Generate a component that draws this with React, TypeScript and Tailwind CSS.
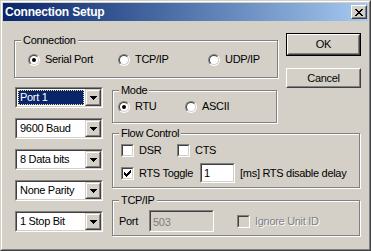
import type { ReactNode } from 'react';

const X_ROWS = ['XX....XX', '.XX..XX.', '..XXXX..', '...XX...', '..XXXX..', '.XX..XX.', 'XX....XX'];

function CloseGlyph() {
  return (
    <svg width="8" height="7" viewBox="0 0 8 7" shapeRendering="crispEdges">
      {X_ROWS.flatMap((row, y) =>
        row.split('').map((c, x) => (c === 'X' ? <rect key={`${x}-${y}`} x={x} y={y} width="1" height="1" fill="#000" /> : null))
      )}
    </svg>
  );
}

function Arrow() {
  return (
    <svg width="7" height="4" viewBox="0 0 7 4" shapeRendering="crispEdges">
      <rect x="0" y="0" width="7" height="1" fill="#000" />
      <rect x="1" y="1" width="5" height="1" fill="#000" />
      <rect x="2" y="2" width="3" height="1" fill="#000" />
      <rect x="3" y="3" width="1" height="1" fill="#000" />
    </svg>
  );
}

function Group({ label, className, children }: { label: string; className: string; children?: ReactNode }) {
  return (
    <div className={`relative border border-[#808080] shadow-[1px_1px_0_#fff,inset_1px_1px_0_#fff] ${className}`}>
      <span className="absolute left-[6px] top-[-7px] px-[2px] bg-[#d4d0c8] leading-[13px]">{label}</span>
      {children}
    </div>
  );
}

function Button({ label, isDefault }: { label: string; isDefault?: boolean }) {
  return (
    <div className={`w-[75px] h-[23px] ${isDefault ? 'border border-black' : ''}`}>
      <div className="h-full border border-white border-r-[#404040] border-b-[#404040]">
        <div className="h-full flex items-center justify-center border border-transparent border-r-[#808080] border-b-[#808080]">
          {label}
        </div>
      </div>
    </div>
  );
}

function Sunken({ className, inner, children }: { className: string; inner: string; children?: ReactNode }) {
  return (
    <div className={`border border-[#808080] border-r-white border-b-white ${className}`}>
      <div className={`h-full border border-[#404040] border-r-[#d4d0c8] border-b-[#d4d0c8] ${inner}`}>{children}</div>
    </div>
  );
}

function Combo({ value, selected }: { value: string; selected?: boolean }) {
  return (
    <Sunken className="w-[88px] h-[21px]" inner="flex bg-white">
      <div className="flex-1 p-[1px]">
        {selected ? (
          <div className="h-full flex items-center pl-[1px] bg-[#0a246a] text-white border border-dotted border-[#e8e0a0]">{value}</div>
        ) : (
          <div className="h-full flex items-center pl-[2px]">{value}</div>
        )}
      </div>
      <div className="w-[16px] h-full border border-[#d4d0c8] border-r-[#404040] border-b-[#404040]">
        <div className="h-full flex items-center justify-center bg-[#d4d0c8] border border-white border-r-[#808080] border-b-[#808080]">
          <Arrow />
        </div>
      </div>
    </Sunken>
  );
}

function Radio({ label, checked }: { label: string; checked?: boolean }) {
  return (
    <div className="flex items-center gap-[5px]">
      <div className="w-[12px] h-[12px] rounded-full border border-[#808080] border-r-white border-b-white">
        <div className="h-full rounded-full flex items-center justify-center bg-white border border-[#404040] border-r-[#d4d0c8] border-b-[#d4d0c8]">
          {checked && <div className="w-[4px] h-[4px] rounded-full bg-black" />}
        </div>
      </div>
      <span className="leading-[13px]">{label}</span>
    </div>
  );
}

function Check({ label, checked, disabled }: { label: string; checked?: boolean; disabled?: boolean }) {
  return (
    <div className="flex items-center gap-[5px]">
      <Sunken className="w-[13px] h-[13px] shrink-0" inner={`flex items-center justify-center ${disabled ? 'bg-[#d4d0c8]' : 'bg-white'}`}>
        {checked && (
          <svg width="7" height="7" viewBox="0 0 7 7" shapeRendering="crispEdges">
            <path d="M6 0h1v3h-1v1h-1v1h-1v1h-1v1h-1v-1h-1v-1h-1v-3h1v1h1v1h1v-1h1v-1h1z" fill="#000" />
          </svg>
        )}
      </Sunken>
      <span className={`leading-[13px] ${disabled ? 'text-[#808080] [text-shadow:1px_1px_0_#fff]' : ''}`}>{label}</span>
    </div>
  );
}

export default function App() {
  return (
    <div className="w-[371px] h-[251px] bg-[#d4d0c8] text-black text-[11px] tracking-[-0.3px] font-['Liberation_Sans',Arial,sans-serif] border border-[#d4d0c8] border-r-[#404040] border-b-[#404040]">
      <div className="h-full border border-white border-r-[#808080] border-b-[#808080] p-[1px]">
        <div className="h-[18px] flex items-center justify-between pl-[2px] pr-[1px] bg-linear-to-r from-[#0a246a] to-[#a6caf0]">
          <span className="text-white font-bold text-[12px] tracking-[-0.2px] leading-none">Connection Setup</span>
          <div className="w-[16px] h-[14px] border border-white border-r-[#404040] border-b-[#404040]">
            <div className="h-full flex items-center justify-center bg-[#d4d0c8] border border-transparent border-r-[#808080] border-b-[#808080]">
              <CloseGlyph />
            </div>
          </div>
        </div>

        <div className="pl-[11px] pt-[12px]">
          <div className="flex h-[45px]">
            <Group label="Connection" className="mt-[7px] w-[264px] h-[38px] flex items-center pl-[13px] pt-[1px]">
              <div className="w-[90px]"><Radio label="Serial Port" checked /></div>
              <div className="w-[90px]"><Radio label="TCP/IP" /></div>
              <Radio label="UDP/IP" />
            </Group>
            <div className="ml-[8px] flex flex-col gap-[12px]">
              <Button label="OK" isDefault />
              <Button label="Cancel" />
            </div>
          </div>

          <div className="flex mt-[9px]">
            <div className="ml-[1px] flex flex-col gap-[10px]">
              <Combo value="Port 1" selected />
              <Combo value="9600 Baud" />
              <Combo value="8 Data bits" />
              <Combo value="None Parity" />
              <Combo value="1 Stop Bit" />
            </div>

            <div className="ml-[9px] flex flex-col">
              <Group label="Mode" className="mt-[3px] w-[165px] h-[33px] flex items-start pl-[5px] pt-[9px]">
                <div className="w-[67px]"><Radio label="RTU" checked /></div>
                <Radio label="ASCII" />
              </Group>

              <Group label="Flow Control" className="mt-[10px] w-[248px] h-[55px] pl-[8px] pt-[10px]">
                <div className="flex">
                  <div className="w-[56px]"><Check label="DSR" /></div>
                  <Check label="CTS" />
                </div>
                <div className="flex items-center mt-[6px]">
                  <Check label="RTS Toggle" checked />
                  <Sunken className="ml-[7px] w-[35px] h-[20px]" inner="flex items-center pl-[2px] bg-white">1</Sunken>
                  <span className="ml-[5px] leading-[13px]">[ms] RTS disable delay</span>
                </div>
              </Group>

              <Group label="TCP/IP" className="mt-[12px] w-[248px] h-[36px] flex items-center pl-[6px] pt-[6px]">
                <span className="w-[30px] leading-[13px]">Port</span>
                <Sunken className="w-[65px] h-[22px]" inner="flex items-start pl-[2px] pt-[2px] bg-[#d4d0c8] text-[#808080]">503</Sunken>
                <div className="ml-[23px]"><Check label="Ignore Unit ID" disabled /></div>
              </Group>
            </div>
          </div>
        </div>
      </div>
    </div>
  );
}
